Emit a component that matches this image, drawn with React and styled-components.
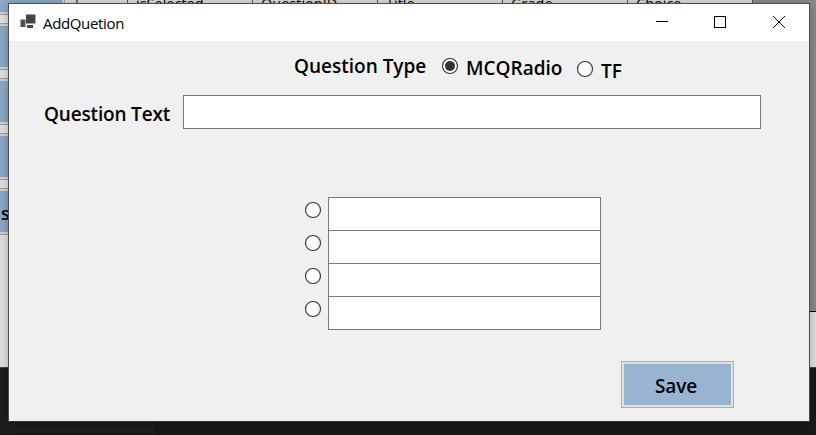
import React from "react";
import styled, { createGlobalStyle } from "styled-components";

const Global = createGlobalStyle`
  * { box-sizing: border-box; }
  body { margin: 0; overflow: hidden; font-family: "Open Sans", "Noto Sans", sans-serif; color: #000; }
`;

const Desktop = styled.div`
  position: relative;
  width: 816px;
  height: 435px;
  overflow: hidden;
  display: flex;
  flex-direction: column;
  background: #181818;
`;

const BackApp = styled.div`
  flex: none;
  display: flex;
  height: 368px;
  background: #e0e0e0;
  border-bottom: 1px solid #444;
`;

const Rail = styled.div`
  flex: none;
  width: 65px;
  margin-top: -32px;
  display: flex;
  flex-direction: column;
  gap: 8px;
`;

const RailButton = styled.div`
  flex: none;
  height: 47px;
  border: 1px solid #9b9b9b;
  border-left: 0;
  background: #8ca6c3;
  box-shadow: inset 0 0 0 2px #cdd1d4;
  margin-left: -3px;
  padding: 10px 0 0 4px;
  font-size: 18px;
  font-weight: 600;
  line-height: 28px;
`;

const Sheet = styled.div`
  flex: 1;
  display: flex;
  flex-direction: column;
  height: 312px;
  background: #888;
  border-bottom: 1px solid #000;
`;

const HeaderRow = styled.div`
  display: flex;
  width: 688px;
  height: 26px;
  margin-top: -12px;
  background: #d6d6d6;
`;

const HeaderCell = styled.div`
  width: ${(p) => p.$width}px;
  padding: 5px 0 0 ${(p) => p.$pad ?? 8}px;
  border-right: 1px solid #555;
  font-size: 14.5px;
  line-height: 21px;
`;

const Taskbar = styled.div`
  display: flex;
  flex: 1;
  border-bottom: 1px solid #171012;
`;

const TaskSection = styled.div`
  width: 155px;
  background: #1d1d1d;
`;

const Dialog = styled.main`
  position: absolute;
  left: 8px;
  top: 3px;
  width: 802px;
  height: 419px;
  border: 1px solid #4d4d4d;
  border-bottom-color: #303030;
  background: #f0f0f0;
  box-shadow: 0 2px 9px rgba(0, 0, 0, 0.25);
`;

const TitleBar = styled.header`
  display: flex;
  height: 37px;
  background: #fff;
  padding-left: 11px;
`;

const AppIcon = styled.svg`
  flex: none;
  width: 17px;
  height: 16px;
  margin-top: 10px;
`;

const Title = styled.div`
  flex: 1;
  margin-left: 6px;
  padding-top: 1px;
  font-size: 15px;
  line-height: 36px;
  letter-spacing: -0.35px;
`;

const Captions = styled.div`
  display: flex;
  margin-right: -1px;
`;

const Caption = styled.svg`
  flex: none;
  width: 58px;
  height: 37px;
  fill: none;
  stroke: #000;
`;

const TypeRow = styled.div`
  display: flex;
  height: 54px;
  padding-left: 285px;
`;

const Label = styled.span`
  flex: none;
  width: ${(p) => p.$width}px;
  margin-top: ${(p) => p.$top}px;
  font-size: 19px;
  font-weight: 600;
  line-height: 26px;
  white-space: nowrap;
  letter-spacing: ${(p) => p.$spacing ?? 0}px;
`;

const Radio = styled.svg`
  flex: none;
  width: 18px;
  height: 18px;
  margin: ${(p) => p.$margin};
`;

const TextRow = styled.div`
  display: flex;
  padding-left: 35px;
`;

const TextBox = styled.div`
  width: ${(p) => p.$width}px;
  height: 34px;
  border: 1px solid #7a7a7a;
  background: #fff;
`;

const Answers = styled.div`
  margin: 68px 0 0 295px;
`;

const AnswerRow = styled.div`
  display: flex;
  height: 33px;
`;

const SaveButton = styled.button`
  display: block;
  width: 113px;
  height: 47px;
  margin: 32px 0 0 612px;
  padding: 3px 3px 0 0;
  border: 1px solid #adadad;
  background: #99b4d1;
  box-shadow: inset 0 0 0 2px #e1e1e1;
  font: 600 19px/26px "Open Sans", sans-serif;
  letter-spacing: -0.1px;
  color: #000;
`;

function RadioMark({ checked, margin }) {
  return (
    <Radio $margin={margin} viewBox="0 0 18 18">
      <circle cx="9" cy="9" r="7.5" fill="#fff" stroke="#333" strokeWidth="1.15" />
      {checked && <circle cx="9" cy="9" r="5" fill="#333" />}
    </Radio>
  );
}

export default function App() {
  return (
    <>
      <Global />
      <Desktop>
        <BackApp>
          <Rail>
            <RailButton />
            <RailButton />
            <RailButton />
            <RailButton />
            <RailButton>s</RailButton>
          </Rail>
          <Sheet>
            <HeaderRow>
              <HeaderCell $width={63} $pad={8}>|</HeaderCell>
              <HeaderCell $width={125}>isSelected</HeaderCell>
              <HeaderCell $width={125}>QuestionID</HeaderCell>
              <HeaderCell $width={125}>Title</HeaderCell>
              <HeaderCell $width={125}>Grade</HeaderCell>
              <HeaderCell $width={125}>Choice</HeaderCell>
            </HeaderRow>
          </Sheet>
        </BackApp>
        <Taskbar>
          <TaskSection />
        </Taskbar>

        <Dialog>
          <TitleBar>
            <AppIcon viewBox="0 0 17 16">
              <rect x="6" y="0.5" width="9.5" height="9" fill="#444" />
              <rect x="0.5" y="5.5" width="5" height="7.5" fill="#505050" />
              <rect x="7" y="11" width="6" height="3" fill="#444" />
            </AppIcon>
            <Title>AddQuetion</Title>
            <Captions>
              <Caption viewBox="0 0 58 37">
                <path d="M20 17.5h12" />
              </Caption>
              <Caption viewBox="0 0 58 37">
                <rect x="20.5" y="12.5" width="11" height="11" />
              </Caption>
              <Caption viewBox="0 0 58 37">
                <path d="M21 12l12 12M33 12l-12 12" />
              </Caption>
            </Captions>
          </TitleBar>
          <TypeRow>
            <Label $width={147} $top={12}>Question Type</Label>
            <RadioMark checked margin="16px 7px 0 0" />
            <Label $width={110} $top={14}>MCQRadio</Label>
            <RadioMark margin="19px 7px 0 0" />
            <Label $width={30} $top={17}>TF</Label>
          </TypeRow>
          <TextRow>
            <Label $width={139} $top={6} $spacing={-0.17}>Question Text</Label>
            <TextBox $width={578} />
          </TextRow>
          <Answers>
            {[0, 1, 2, 3].map((n) => (
              <AnswerRow key={n}>
                <RadioMark margin="4px 6px 0 0" />
                <TextBox $width={273} />
              </AnswerRow>
            ))}
          </Answers>
          <SaveButton>Save</SaveButton>
        </Dialog>
      </Desktop>
    </>
  );
}
